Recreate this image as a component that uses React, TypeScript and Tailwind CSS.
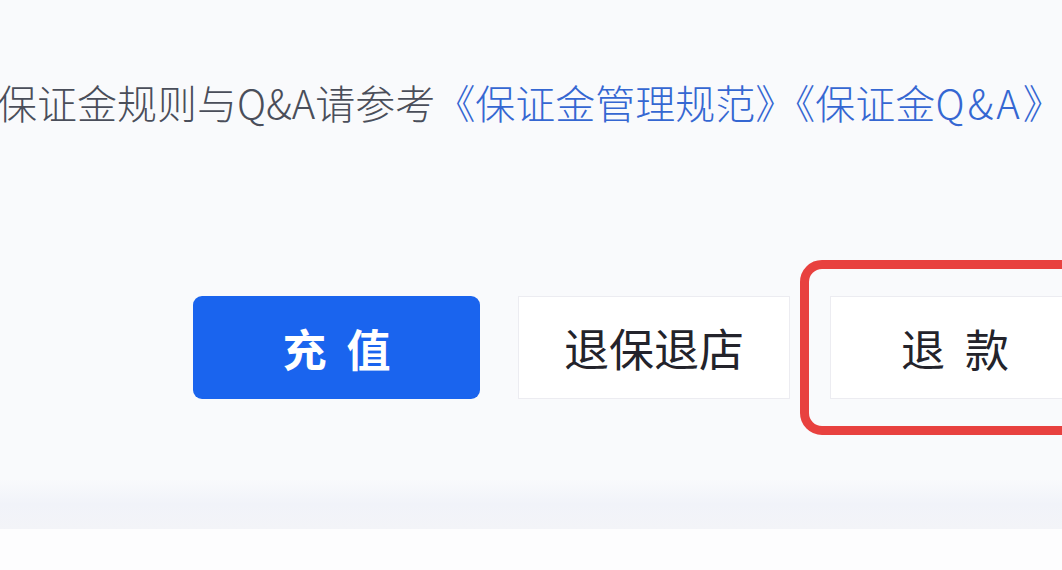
import React from "react";

const cjk = { fontFamily: '"Noto Sans CJK SC", "Noto Sans", sans-serif' };

export default function App() {
  return (
    <div className="w-[1062px] h-[570px] overflow-hidden bg-[#f9fafc] flex flex-col" style={cjk}>
      <div className="pt-[79px] ml-[-3px] whitespace-nowrap text-[40px] leading-[46px] font-light text-[#4a4e5a]">
        保证金规则与Q&amp;A请参考
        <span className="text-[#3567d2]">《保证金管理规范》《保证金<span className="tracking-[3px]">Q&amp;A</span>》</span>
      </div>

      <div className="mt-[135px] flex items-center pl-[193px] whitespace-nowrap">
        <button className="shrink-0 w-[287px] h-[103px] rounded-[9px] bg-[#1a64ee] text-white text-[44px] font-bold flex items-center justify-center gap-[20px]">
          <span>充</span>
          <span>值</span>
        </button>
        <button className="shrink-0 ml-[38px] w-[272px] h-[103px] bg-white border border-[#ececf1] text-[#23232b] text-[45px] flex items-center justify-center">
          退保退店
        </button>
        <div className="shrink-0 ml-[10px] border-[9px] border-[#e8413f] rounded-[22px] pl-[21px] pr-[20px] pt-[27px] pb-[27px]">
          <button className="w-[250px] h-[103px] bg-white border border-[#ececf1] text-[#23232b] text-[44px] flex items-center justify-center gap-[20px]">
            <span>退</span>
            <span>款</span>
          </button>
        </div>
      </div>

      <div className="mt-[44px] h-[50px] bg-gradient-to-b from-[#f9fafc] via-[#f1f3f9] to-[#f3f4f8]" />
      <div className="flex-1 bg-[#fdfdfe]" />
    </div>
  );
}
